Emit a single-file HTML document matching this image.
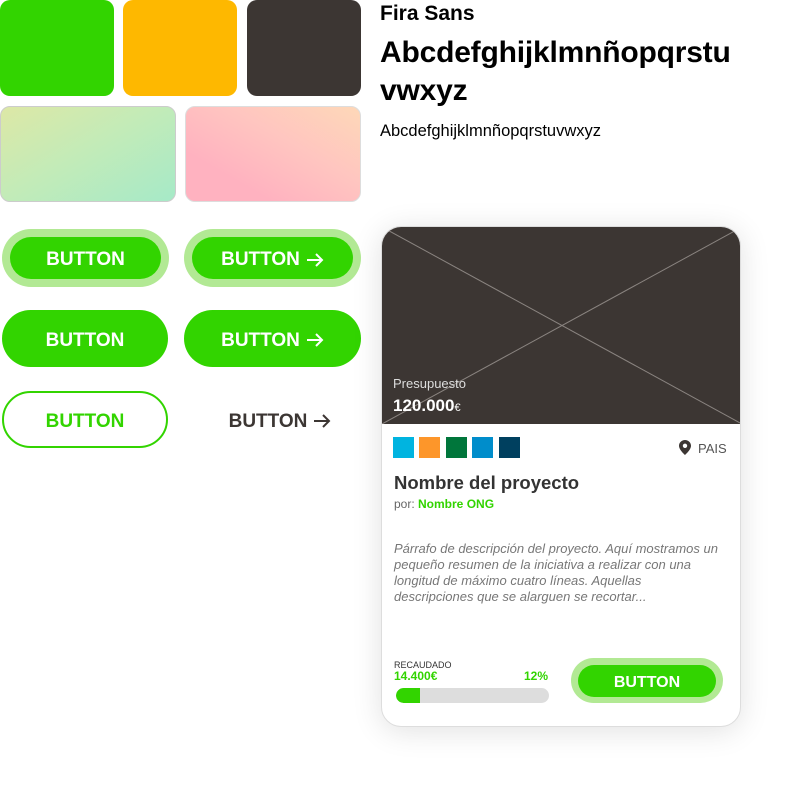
<!DOCTYPE html>
<html><head><meta charset="utf-8"><style>
*{margin:0;padding:0;box-sizing:border-box}
body{width:800px;height:786px;background:#fff;position:relative;overflow:hidden;font-family:"Liberation Sans",sans-serif;color:#3c3633}
.a{position:absolute}
.sw{border-radius:10px}
.btn{position:absolute;display:flex;align-items:center;justify-content:center;border-radius:40px;background:#32d400;color:#fff;font-weight:bold;font-size:19px;line-height:1;padding-top:3px}
.btn svg{margin-left:6px}
.halo{position:absolute;border-radius:40px;background:#b2e994}
</style></head><body>
<div class="a sw" style="left:0;top:0;width:114px;height:96px;background:#32d400"></div>
<div class="a sw" style="left:123px;top:0;width:114px;height:96px;background:#feb800"></div>
<div class="a sw" style="left:247px;top:0;width:114px;height:96px;background:#3c3633"></div>
<div class="a sw" style="left:0;top:106px;width:176px;height:96px;background:linear-gradient(150deg,#dde8a6,#c4ebb7 45%,#a6eac8);border:1px solid #ccc"></div>
<div class="a sw" style="left:185px;top:106px;width:176px;height:96px;background:linear-gradient(30deg,#ffb2c0 25%,#ffc5c0 60%,#fed8b8);border:1px solid #ddd"></div>

<div class="a" style="left:380px;top:2px;font-size:21px;font-weight:bold;color:#000">Fira Sans</div>
<div class="a" style="left:380px;top:34px;width:400px;font-size:30px;line-height:38px;font-weight:bold;color:#000;letter-spacing:-0.2px">Abcdefghijklmnñopqrstu<br>vwxyz</div>
<div class="a" style="left:380px;top:122px;font-size:16.5px;color:#000">Abcdefghijklmnñopqrstuvwxyz</div>

<div class="halo" style="left:2px;top:229px;width:167px;height:58px"></div>
<div class="btn" style="left:10px;top:237px;width:151px;height:42px">BUTTON</div>
<div class="halo" style="left:184px;top:229px;width:177px;height:58px"></div>
<div class="btn" style="left:192px;top:237px;width:161px;height:42px">BUTTON<svg width="18" height="14" viewBox="0 0 18 14"><path d="M1 7h15M10 1l6 6-6 6" fill="none" stroke="#fff" stroke-width="2"/></svg></div>
<div class="btn" style="left:2px;top:310px;width:166px;height:57px">BUTTON</div>
<div class="btn" style="left:184px;top:310px;width:177px;height:57px">BUTTON<svg width="18" height="14" viewBox="0 0 18 14"><path d="M1 7h15M10 1l6 6-6 6" fill="none" stroke="#fff" stroke-width="2"/></svg></div>
<div class="btn" style="left:2px;top:391px;width:166px;height:57px;background:#fff;border:2px solid #32d400;color:#32d400">BUTTON</div>
<div class="btn" style="left:200px;top:391px;width:160px;height:57px;background:none;color:#3c3633">BUTTON<svg width="18" height="14" viewBox="0 0 18 14"><path d="M1 7h15M10 1l6 6-6 6" fill="none" stroke="#3c3633" stroke-width="2"/></svg></div>

<div class="a" style="left:381px;top:226px;width:360px;height:501px;border-radius:20px;background:#fff;box-shadow:0 4px 30px rgba(0,0,0,.12);border:1px solid #ddd;overflow:hidden">
 <div class="a" style="left:0;top:0;width:360px;height:197px;background:#3c3633">
  <svg width="360" height="197" style="position:absolute;left:0;top:0"><line x1="0" y1="0" x2="360" y2="197" stroke="#8a8480" stroke-width="1"/><line x1="360" y1="0" x2="0" y2="197" stroke="#8a8480" stroke-width="1"/></svg>
  <div class="a" style="left:11px;top:149px;color:#ddd;font-size:13px">Presupuesto</div>
  <div class="a" style="left:11px;top:169px;color:#fff;font-size:17px;font-weight:bold">120.000<span style="font-size:11px;font-weight:normal">€</span></div>
 </div>
 <div class="a" style="left:11px;top:210px;width:21px;height:21px;background:#00b4e0"></div>
 <div class="a" style="left:37px;top:210px;width:21px;height:21px;background:#fd962a"></div>
 <div class="a" style="left:64px;top:210px;width:21px;height:21px;background:#00763b"></div>
 <div class="a" style="left:90px;top:210px;width:21px;height:21px;background:#008dcb"></div>
 <div class="a" style="left:117px;top:210px;width:21px;height:21px;background:#00405f"></div>
 <svg class="a" style="left:297px;top:213px" width="12" height="15" viewBox="0 0 12 15"><path d="M6 0C2.7 0 0 2.6 0 5.8 0 10 6 15 6 15s6-5 6-9.2C12 2.6 9.3 0 6 0zm0 8a2.2 2.2 0 1 1 0-4.4A2.2 2.2 0 0 1 6 8z" fill="#3c3633"/></svg>
 <div class="a" style="left:316px;top:214px;font-size:13px;color:#555">PAIS</div>
 <div class="a" style="left:12px;top:245px;font-size:18.5px;font-weight:bold;color:#333">Nombre del proyecto</div>
 <div class="a" style="left:12px;top:270px;font-size:12px;color:#666">por: <b style="color:#32d400">Nombre ONG</b></div>
 <div class="a" style="left:12px;top:314px;width:325px;font-size:13px;line-height:16px;font-style:italic;color:#777">Párrafo de descripción del proyecto. Aquí mostramos un pequeño resumen de la iniciativa a realizar con una longitud de máximo cuatro líneas. Aquellas descripciones que se alarguen se recortar...</div>
 <div class="a" style="left:12px;top:433px;font-size:9px;color:#333">RECAUDADO</div>
 <div class="a" style="left:12px;top:442px;font-size:12px;font-weight:bold;color:#32d400">14.400€</div>
 <div class="a" style="left:142px;top:442px;font-size:12px;font-weight:bold;color:#32d400">12%</div>
 <div class="a" style="left:14px;top:461px;width:153px;height:15px;border-radius:8px;background:#ddd;overflow:hidden"><div style="width:24px;height:15px;background:#32d400;border-radius:8px 0 0 8px"></div></div>
 <div class="halo" style="left:189px;top:431px;width:152px;height:45px"></div>
 <div class="btn" style="left:196px;top:438px;width:138px;height:32px;font-size:16px">BUTTON</div>
</div>
</body></html>
